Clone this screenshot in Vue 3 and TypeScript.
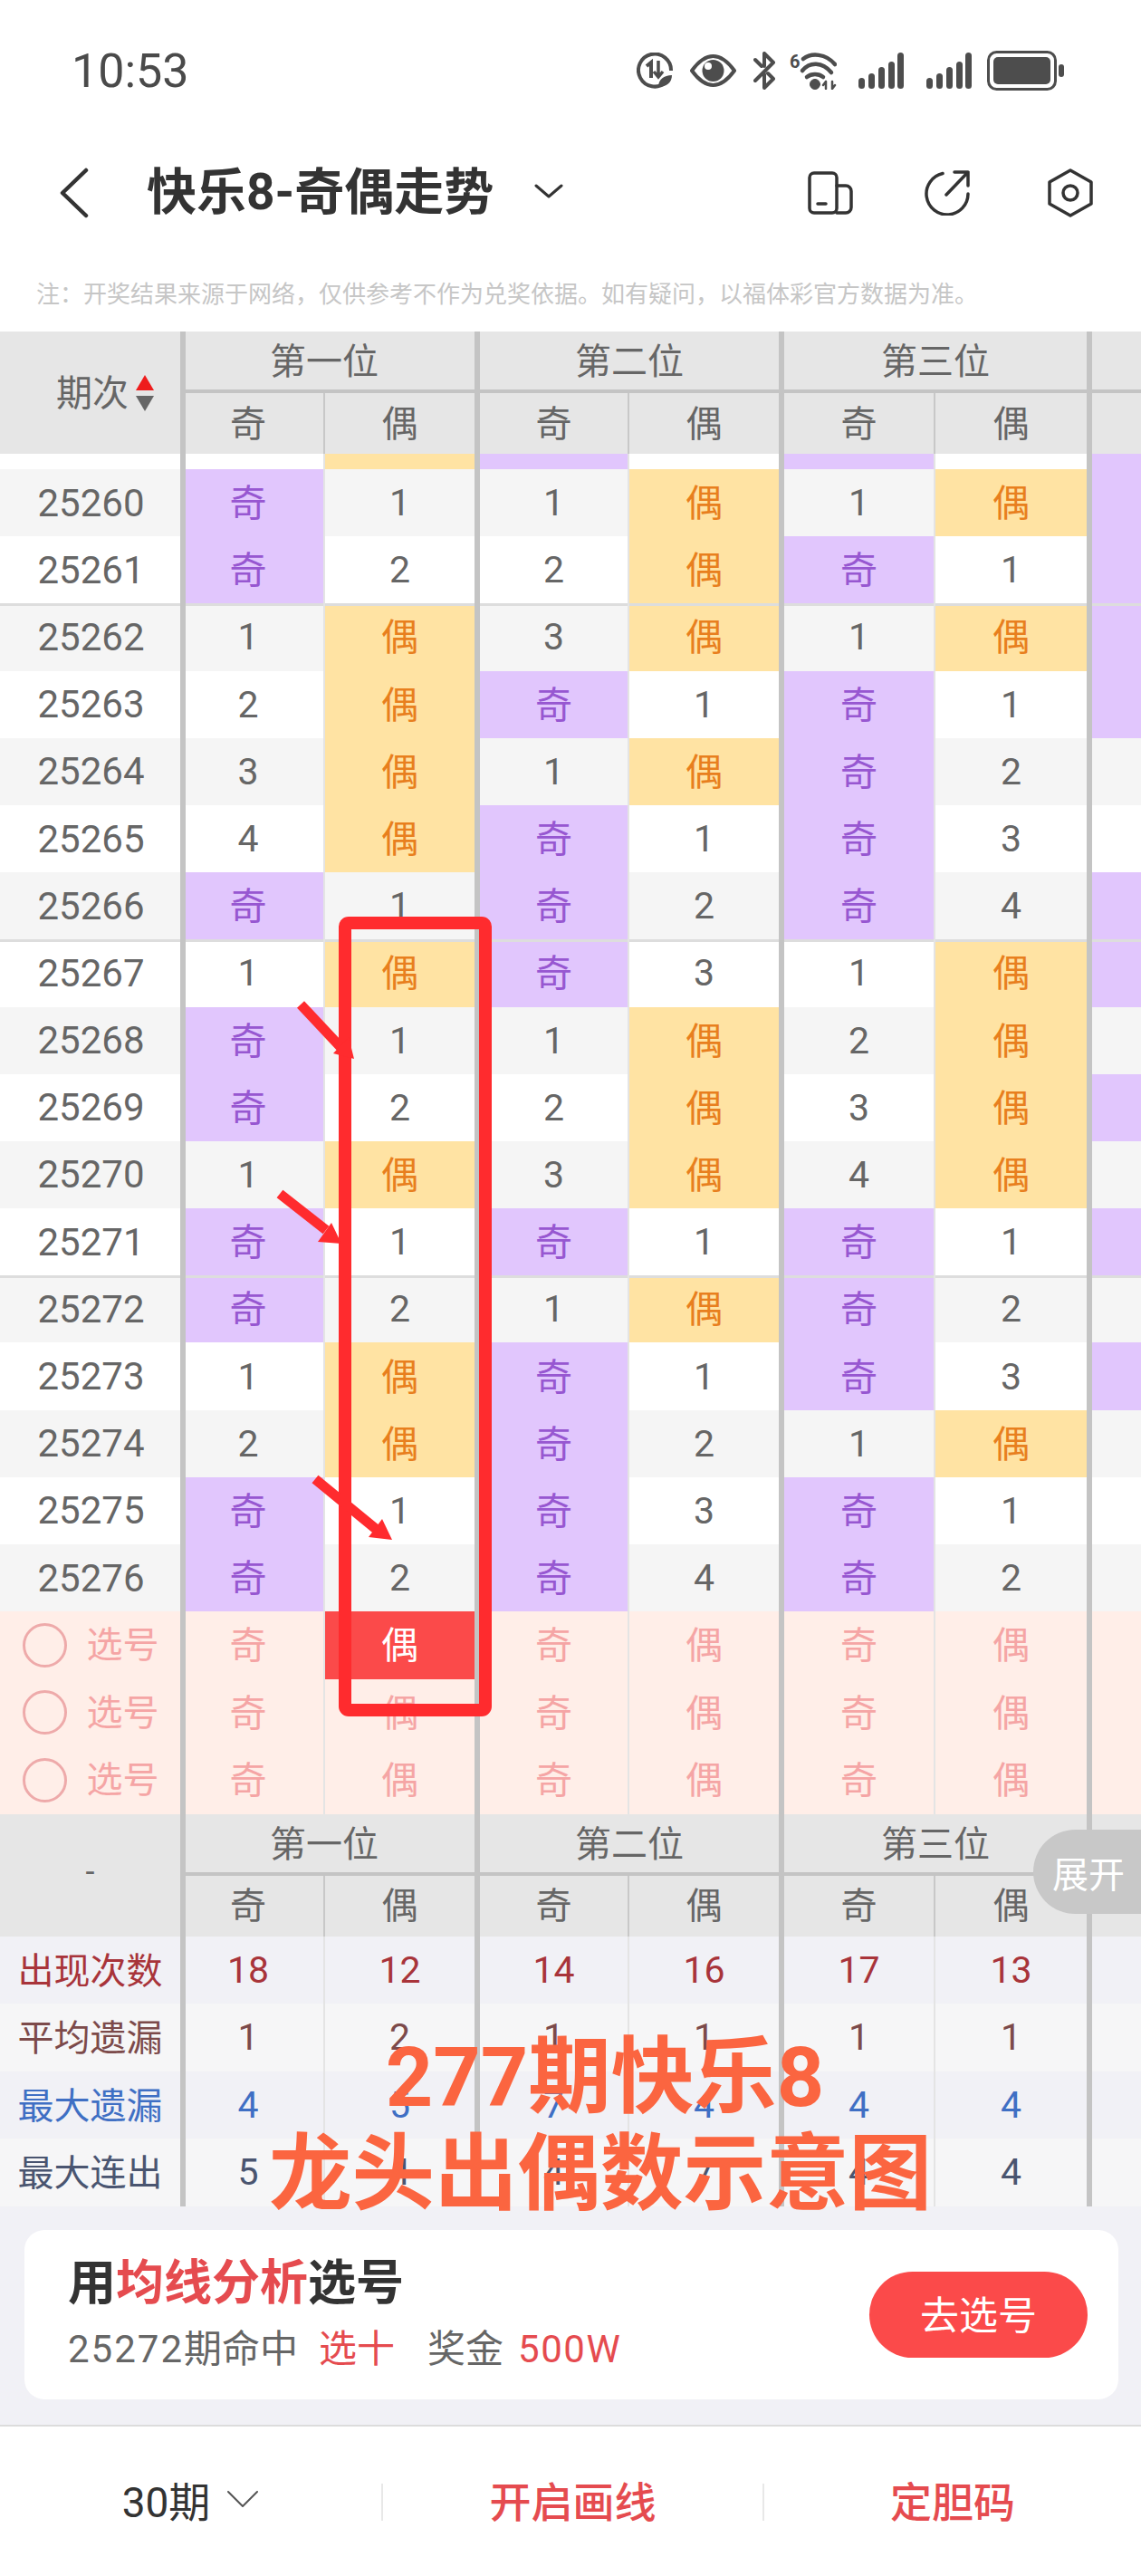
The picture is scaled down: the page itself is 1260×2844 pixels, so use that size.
<template>
  <div class="page">
    <div class="status-bar">
      <span class="status-time">10:53</span>
      <div class="status-icons">
        <svg width="40" height="40" viewBox="0 0 40 40" fill="none" stroke="#4d4d4d">
          <path d="M32 33A18 18 0 1 1 38 20" stroke-width="4" />
          <path d="M11 15l5-4v17" stroke-width="4" />
          <path d="M24 9v17M19 21l5 6 5-6" stroke-width="3.500" />
          <path d="M24 38c0-8 6-13 15-13 0 8-6 13-15 13z" fill="#4d4d4d" stroke="none" />
        </svg>
        <svg width="51" height="36" viewBox="0 0 51 36" fill="none" class="gap-eye">
          <path d="M2 18C10 7 17 2 25.500 2S41 7 49 18C41 29 34 34 25.500 34S10 29 2 18z" stroke="#4d4d4d" stroke-width="4" stroke-linejoin="round" />
          <circle cx="25.500" cy="18" r="12" fill="#4d4d4d" />
          <circle cx="20" cy="13" r="4" fill="#fff" />
        </svg>
        <svg width="25" height="42" viewBox="0 0 25 42" fill="none" stroke="#4d4d4d" stroke-width="4" stroke-linejoin="round" stroke-linecap="round" class="gap-bt">
          <path d="M2 32L22 12 12 2v14M12 25v15l10-10-6-6" />
          <path d="M2 9l7 7" />
        </svg>
        <svg width="52" height="42" viewBox="0 0 52 42" fill="none" stroke="#4d4d4d" stroke-linecap="round" class="gap-wifi">
          <text x="0" y="18" font-size="20" font-weight="700" fill="#4d4d4d" stroke="none" font-family="Roboto, sans-serif">6</text>
          <path d="M15 8C24 1 40 2 50 14" stroke-width="4.500" />
          <path d="M14 21C22 11 36 11 46 23" stroke-width="4.500" />
          <path d="M19 28C24 24 32 24 37 28" stroke-width="4.500" />
          <circle cx="28" cy="36" r="5.500" fill="#4d4d4d" />
          <path d="M40 33v8M37 37l3-4M47 33v8M50 37l-3 4" stroke-width="2.500" />
        </svg>
        <svg v-for="n in 2" :key="n" width="50" height="40" viewBox="0 0 50 40" fill="#4d4d4d" :class="n === 1 ? 'gap-signal' : 'gap-signal-2'">
          <rect x="0" y="28" width="7" height="12" rx="3.500" />
          <rect x="11" y="23" width="7" height="17" rx="3.500" />
          <rect x="22" y="16" width="7" height="24" rx="3.500" />
          <rect x="33" y="10" width="7" height="30" rx="3.500" />
          <rect x="43" y="0" width="7" height="40" rx="3.500" />
        </svg>
        <svg width="85" height="44" viewBox="0 0 85 44" fill="none" class="gap-battery">
          <rect x="1.500" y="1.500" width="74" height="41" rx="9" stroke="#4d4d4d" stroke-width="3" />
          <rect x="7" y="7" width="63" height="30" rx="5" fill="#4d4d4d" />
          <rect x="79" y="15" width="6" height="14" rx="3" fill="#4d4d4d" />
        </svg>
      </div>
    </div>

    <div class="nav-bar">
      <svg class="nav-back" width="33" height="56" viewBox="0 0 33 56" fill="none" stroke="#333" stroke-width="4.500" stroke-linecap="round" stroke-linejoin="round">
        <path d="M30 3L4 28l26 25" />
      </svg>
      <span class="nav-title">快乐8-奇偶走势</span>
      <svg class="nav-caret" width="32" height="16" viewBox="0 0 32 16" fill="none" stroke="#333" stroke-width="3" stroke-linecap="round" stroke-linejoin="round">
        <path d="M2 2l14 12L30 2" />
      </svg>
      <div class="nav-actions">
        <svg width="50" height="48" viewBox="0 0 50 48" fill="none" stroke="#333" stroke-width="3.500" stroke-linecap="round">
          <rect x="2" y="2" width="30" height="44" rx="5" />
          <path d="M32 16h10a6 6 0 0 1 6 6v18a6 6 0 0 1-6 6H32M11 36h9" />
        </svg>
        <svg class="nav-share" width="52" height="50" viewBox="0 0 52 50" fill="none" stroke="#333" stroke-width="3.500" stroke-linecap="round" stroke-linejoin="round">
          <path d="M21 3.500A23 23 0 1 0 49 26M25 27L49 2M34 2h15v15" />
        </svg>
        <svg class="nav-hex" width="50" height="54" viewBox="0 0 50 54" fill="none" stroke="#333" stroke-width="3.500" stroke-linejoin="round">
          <path d="M25 2l23 13v24L25 52 2 39V15z" />
          <circle cx="25" cy="27" r="8" />
        </svg>
      </div>
    </div>

    <p class="note">注：开奖结果来源于网络，仅供参考不作为兑奖依据。如有疑问，以福体彩官方数据为准。</p>

    <div class="grid head">
      <div class="head-first head-sort">
        <span>期次</span>
        <svg width="20" height="40" viewBox="0 0 20 40">
          <path d="M10 0l10 17H0z" fill="#ee1c1c" />
          <path d="M0 23h20L10 40z" fill="#666" />
        </svg>
      </div>
      <div v-for="g in groups" :key="g" class="group" :class="{ 'group-first': g === '第一位' }">{{ g }}</div>
      <div class="group group-rest"></div>
      <div v-for="(s, i) in subHeads" :key="i" class="sub" :class="colClass(i)">{{ s }}</div>
      <div class="sub col-last"></div>
    </div>

    <div class="grid row row-partial">
      <div class="cell col-no"></div>
      <div v-for="(c, i) in partialRow" :key="i" class="cell" :class="[colClass(i), cellClass(c)]"></div>
      <div class="cell col-last is-odd"></div>
    </div>

    <div
      v-for="r in rows"
      :key="r.no"
      class="grid row"
      :class="{ 'row-grey': r.no % 2 === 0, 'row-mark': marked.includes(r.no) }"
    >
      <div class="cell col-no">{{ r.no }}</div>
      <div v-for="(c, i) in r.cells" :key="i" class="cell" :class="[colClass(i), cellClass(c)]">{{ c }}</div>
      <div class="cell col-last" :class="{ 'is-odd': r.last }"></div>
    </div>

    <div v-for="p in 3" :key="p" class="grid row row-pick">
      <div class="cell col-no pick-first">
        <span class="pick-ring"></span>
        <span>选号</span>
      </div>
      <div
        v-for="(s, i) in subHeads"
        :key="i"
        class="cell"
        :class="[colClass(i), { 'is-picked': p === 1 && i === 1 }]"
      >{{ s }}</div>
      <div class="cell col-last"></div>
    </div>

    <div class="grid head head-foot">
      <div class="head-first"><span class="head-dash">-</span></div>
      <div v-for="g in groups" :key="g" class="group" :class="{ 'group-first': g === '第一位' }">{{ g }}</div>
      <div class="group group-rest"></div>
      <div v-for="(s, i) in subHeads" :key="i" class="sub" :class="colClass(i)">{{ s }}</div>
      <div class="sub col-last"></div>
    </div>

    <div
      v-for="(s, idx) in stats"
      :key="s.label"
      class="grid row row-stat"
      :class="[s.tone, idx % 2 === 0 ? 'stat-blue' : 'stat-grey']"
    >
      <div class="cell col-no">{{ s.label }}</div>
      <div v-for="(c, i) in s.values" :key="i" class="cell" :class="colClass(i)">{{ c }}</div>
      <div class="cell col-last"></div>
    </div>

    <section class="promo-wrap">
      <div class="promo">
        <div class="promo-text">
          <div class="promo-title">用<em>均线分析</em>选号</div>
          <div class="promo-sub"><span class="promo-num">25272</span>期命中<em class="promo-hit">选十</em><span class="promo-prize">奖金</span><em class="promo-money">500W</em></div>
        </div>
        <button class="promo-btn" type="button">去选号</button>
      </div>
    </section>

    <footer class="tabbar">
      <div class="tab tab-period">
        <span>30期</span>
        <svg width="36" height="20" viewBox="0 0 36 20" fill="none" stroke="#555" stroke-width="2" stroke-linecap="round" stroke-linejoin="round">
          <path d="M2 2l16 16L34 2" />
        </svg>
      </div>
      <div class="tab tab-red">开启画线</div>
      <div class="tab tab-red">定胆码</div>
    </footer>

    <div class="expand">展开</div>

    <svg class="marks" width="1260" height="2844" viewBox="0 0 1260 2844" fill="none">
      <rect x="381" y="1019" width="155" height="869" rx="4" stroke="#ff2b2e" stroke-width="14" />
      <g stroke="#ff2b2e" stroke-width="11">
        <path d="M332 1109L378 1158" />
        <path d="M309 1318L360 1358" />
        <path d="M348 1633L415 1688" />
      </g>
      <g fill="#ff2b2e">
        <path d="M391 1169L368 1163 385 1145z" />
        <path d="M377 1373L351 1371 366 1350z" />
        <path d="M433 1700L407 1697 422 1677z" />
      </g>
    </svg>

    <div class="caption">
      <div class="caption-one">277期快乐8</div>
      <div class="caption-two">龙头出偶数示意图</div>
    </div>
  </div>
</template>

<script setup lang="ts">
interface Row {
  no: number
  cells: string[]
  last: boolean
}

const groups = ['第一位', '第二位', '第三位']
const subHeads = ['奇', '偶', '奇', '偶', '奇', '偶']
const partialRow = ['', '偶', '奇', '', '奇', '']
const marked = [25262, 25267, 25272]

const raw: [number, string, boolean][] = [
  [25260, '奇 1 1 偶 1 偶', true],
  [25261, '奇 2 2 偶 奇 1', true],
  [25262, '1 偶 3 偶 1 偶', true],
  [25263, '2 偶 奇 1 奇 1', true],
  [25264, '3 偶 1 偶 奇 2', false],
  [25265, '4 偶 奇 1 奇 3', false],
  [25266, '奇 1 奇 2 奇 4', true],
  [25267, '1 偶 奇 3 1 偶', true],
  [25268, '奇 1 1 偶 2 偶', false],
  [25269, '奇 2 2 偶 3 偶', true],
  [25270, '1 偶 3 偶 4 偶', false],
  [25271, '奇 1 奇 1 奇 1', true],
  [25272, '奇 2 1 偶 奇 2', false],
  [25273, '1 偶 奇 1 奇 3', true],
  [25274, '2 偶 奇 2 1 偶', false],
  [25275, '奇 1 奇 3 奇 1', false],
  [25276, '奇 2 奇 4 奇 2', false],
]

const rows: Row[] = raw.map(([no, text, last]) => ({ no, cells: text.split(' '), last }))

const stats = [
  { label: '出现次数', tone: 'tone-red', values: [18, 12, 14, 16, 17, 13] },
  { label: '平均遗漏', tone: 'tone-brown', values: [1, 2, 1, 1, 1, 1] },
  { label: '最大遗漏', tone: 'tone-blue', values: [4, 5, 7, 4, 4, 4] },
  { label: '最大连出', tone: 'tone-slate', values: [5, 4, 4, 7, 4, 4] },
]

const colClass = (i: number) => `col-${i + 1} ${i % 2 === 0 ? 'col-thin' : 'col-thick'}`

const cellClass = (c: string) => ({ 'is-odd': c === '奇', 'is-even': c === '偶' })
</script>

<style>
body {
  margin: 0;
  background: #fff;
}
</style>

<style scoped>
.page {
  position: relative;
  width: 1260px;
  height: 2844px;
  overflow: hidden;
  background: #fff;
  font-family: Roboto, "Noto Sans CJK SC", sans-serif;
  color: #666;
}

.status-bar {
  display: flex;
  align-items: center;
  justify-content: space-between;
  height: 156px;
  padding: 0 85px 0 79px;
  box-sizing: border-box;
}

.status-time {
  font-size: 52px;
  color: #4a4a4a;
}

.status-icons {
  display: flex;
  align-items: center;
}

.gap-eye,
.gap-bt {
  margin-left: 19px;
}

.gap-wifi {
  margin-left: 15px;
}

.gap-signal {
  margin-left: 24px;
}

.gap-signal-2 {
  margin-left: 25px;
}

.gap-battery {
  margin-left: 17px;
}

.nav-bar {
  display: flex;
  align-items: center;
  height: 114px;
  padding: 0 53px 0 65px;
}

.nav-title {
  margin: 0 0 12px 64px;
  font-size: 55px;
  font-weight: 700;
  color: #333;
}

.nav-caret {
  margin: 0 0 5px 45px;
}

.nav-actions {
  display: flex;
  align-items: center;
  margin-left: auto;
}

.nav-share {
  margin-left: 78px;
}

.nav-hex {
  margin-left: 85px;
}

.note {
  margin: 0;
  height: 96px;
  padding: 16px 0 0 40px;
  box-sizing: border-box;
  font-size: 26px;
  line-height: 78px;
  color: #c6c6c6;
  white-space: nowrap;
}

.grid {
  display: grid;
  grid-template-columns: 205px 154px 171px 165px 171px 167px 173px 54px;
}

.head {
  grid-template-rows: 68px 67px;
  background: #e6e6e6;
  font-size: 40px;
}

.head-first {
  grid-row: span 2;
  display: flex;
  align-items: center;
  justify-content: center;
  gap: 8px;
  border-right: 6px solid #c4c4c4;
}

.head-sort {
  padding: 0 0 0 33px;
}

.head-first span {
  position: relative;
  top: -3px;
}

.head-dash {
  font-size: 36px;
}

.group {
  grid-column: span 2;
  display: flex;
  align-items: center;
  justify-content: center;
  padding-bottom: 4px;
  border-right: 6px solid #c4c4c4;
  border-bottom: 4px solid #c4c4c4;
}

.group-first {
  padding-right: 13px;
}

.group-rest {
  grid-column: span 1;
  border-right: 0;
}

.sub {
  display: flex;
  align-items: center;
  justify-content: center;
  padding-bottom: 6px;
}

.head .col-thin {
  border-right: 2px solid #c8c8c8;
}

.head .col-thick {
  border-right: 6px solid #c4c4c4;
}

.row {
  height: 74.200px;
  font-size: 41px;
  background: #fff;
}

.row-partial {
  height: 17px;
}

.row-grey {
  background: #f5f5f5;
}

.row-mark .cell {
  box-shadow: inset 0 3px 0 #ddd;
}

.cell {
  display: flex;
  align-items: center;
  justify-content: center;
  overflow: hidden;
}

.col-no {
  padding-left: 2px;
  border-right: 6px solid #c4c4c4;
  font-size: 42px;
}

.col-thin {
  border-right: 2px solid #e4e4e4;
}

.col-thick {
  border-right: 6px solid #c4c4c4;
}

.col-1 {
  padding-right: 14px;
}

.is-odd {
  padding-bottom: 6px;
  background: #e1c6fd;
  color: #9757d1;
}

.is-even {
  padding-bottom: 6px;
  background: #ffe3a3;
  color: #e87f1e;
}

.row-pick {
  height: 74.500px;
  background: #ffeee8;
  color: #f5a5a5;
}

.row-pick .cell {
  padding-bottom: 6px;
}

.row-pick .pick-first {
  gap: 21px;
  padding: 0;
  font-size: 40px;
}

.pick-first span:last-child {
  position: relative;
  top: -3px;
  left: 1px;
}

.pick-ring {
  width: 43px;
  height: 43px;
  border: 3px solid #eeaaaa;
  border-radius: 50%;
}

.row-pick .is-picked {
  background: #fb4a4a;
  color: #fff;
}

.row-stat {
  height: 74.500px;
}

.stat-blue {
  background: #f1f1f6;
}

.stat-grey {
  background: #f6f6f7;
}

.tone-red {
  color: #a8343a;
}

.tone-brown {
  color: #7c4a4a;
}

.tone-blue {
  color: #3f6fc4;
}

.tone-slate {
  color: #4a5570;
}

.row-stat .col-no {
  padding: 0 0 4px;
  font-size: 40px;
}

.promo-wrap {
  height: 243px;
  padding: 26px 25px 28px 27px;
  box-sizing: border-box;
  background: #f1f1f6;
  border-bottom: 2px solid #dcdcdc;
}

.promo {
  display: flex;
  align-items: center;
  justify-content: space-between;
  height: 187px;
  padding: 0 34px 0 48px;
  box-sizing: border-box;
  background: #fff;
  border-radius: 22px;
}

.promo em {
  font-style: normal;
  color: #e54b4f;
}

.promo-text {
  padding-bottom: 2px;
}

.promo-title {
  font-size: 53px;
  font-weight: 700;
  line-height: 64px;
  color: #333;
}

.promo-sub {
  margin-top: 15px;
  font-size: 42px;
  line-height: 52px;
  color: #666;
}

.promo-num {
  letter-spacing: 2px;
}

.promo-hit {
  margin-left: 23px;
}

.promo-prize {
  margin-left: 36px;
}

.promo .promo-money {
  margin-left: 16px;
  letter-spacing: 1.500px;
}

.promo-btn {
  width: 241px;
  height: 95px;
  padding: 0 0 5px;
  border: 0;
  border-radius: 48px;
  background: #fb4a4a;
  color: #fff;
  font-family: inherit;
  font-size: 43px;
}

.tabbar {
  display: grid;
  grid-template-columns: 421px 421px 418px;
  padding-top: 63px;
}

.tab {
  display: flex;
  align-items: center;
  justify-content: center;
  gap: 18px;
  height: 41px;
  padding-bottom: 6px;
  box-sizing: border-box;
  font-size: 46px;
}

.tab + .tab {
  border-left: 2px solid #e8e8e8;
}

.tab-period {
  color: #333;
}

.tab-red {
  font-weight: 500;
  color: #e54b4f;
}

.expand {
  position: absolute;
  top: 2020px;
  right: 0;
  display: flex;
  align-items: center;
  width: 119px;
  height: 93px;
  padding-left: 21px;
  box-sizing: border-box;
  border-radius: 47px 0 0 47px;
  background: #c8c8c8;
  color: #fff;
  font-size: 40px;
}

.marks {
  position: absolute;
  top: 0;
  left: 0;
}

.caption {
  position: absolute;
  top: 2240px;
  left: 0;
  width: 1260px;
  font-size: 91.500px;
  font-weight: 700;
  line-height: 107px;
  color: #fb6540;
  text-align: center;
}

.caption-one {
  padding-left: 76px;
}

.caption-two {
  padding-left: 66px;
}
</style>
